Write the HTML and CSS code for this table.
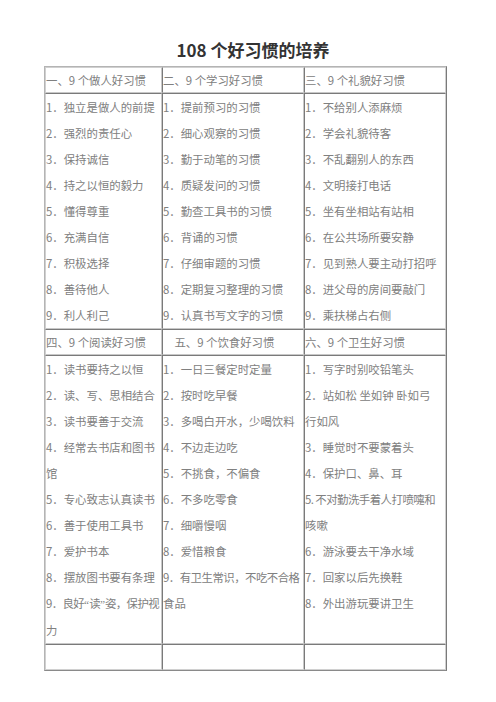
FILE: index.html
```html
<!DOCTYPE html>
<html lang="zh">
<head>
<meta charset="utf-8">
<title>108个好习惯的培养</title>
<link rel="stylesheet" href="styles.css">
</head>
<body>
<h1 class="title">108 个好习惯的培养</h1>
<table class="habits">
  <tr class="head">
    <td class="c1">一、9 个做人好习惯</td>
    <td class="c2">二、9 个学习好习惯</td>
    <td class="c3">三、9 个礼貌好习惯</td>
  </tr>
  <tr class="body">
    <td class="c1">1．独立是做人的前提<br>2．强烈的责任心<br>3．保持诚信<br>4．持之以恒的毅力<br>5．懂得尊重<br>6．充满自信<br>7．积极选择<br>8．善待他人<br>9．利人利己</td>
    <td class="c2">1．提前预习的习惯<br>2．细心观察的习惯<br>3．勤于动笔的习惯<br>4．质疑发问的习惯<br>5．勤查工具书的习惯<br>6．背诵的习惯<br>7．仔细审题的习惯<br>8．定期复习整理的习惯<br>9．认真书写文字的习惯</td>
    <td class="c3">1．不给别人添麻烦<br>2．学会礼貌待客<br>3．不乱翻别人的东西<br>4．文明接打电话<br>5．坐有坐相站有站相<br>6．在公共场所要安静<br>7．见到熟人要主动打招呼<br>8．进父母的房间要敲门<br>9．乘扶梯占右侧</td>
  </tr>
  <tr class="head">
    <td class="c1">四、9 个阅读好习惯</td>
    <td class="c2">　五、9 个饮食好习惯</td>
    <td class="c3">六、9 个卫生好习惯</td>
  </tr>
  <tr class="body">
    <td class="c1">1．读书要持之以恒<br>2．读、写、思相结合<br>3．读书要善于交流<br>4．经常去书店和图书<br>馆<br>5．专心致志认真读书<br>6．善于使用工具书<br>7．爱护书本<br>8．摆放图书要有条理<br><span class="tighter">9．良好<span class="q">“</span>读<span class="q">”</span>姿，保护视</span><br>力</td>
    <td class="c2">1．一日三餐定时定量<br>2．按时吃早餐<br>3．多喝白开水，少喝饮料<br>4．不边走边吃<br>5．不挑食，不偏食<br>6．不多吃零食<br>7．细嚼慢咽<br>8．爱惜粮食<br><span class="tight">9．有卫生常识，不吃不合格</span><br>食品</td>
    <td class="c3">1．写字时别咬铅笔头<br>2．站如松 坐如钟 卧如弓<br>行如风<br>3．睡觉时不要蒙着头<br>4．保护口、鼻、耳<br><span class="tight">5.&#8201;不对勤洗手着人打喷嚏和</span><br>咳嗽<br>6．游泳要去干净水域<br>7．回家以后先换鞋<br>8．外出游玩要讲卫生</td>
  </tr>
  <tr class="empty">
    <td class="c1"></td>
    <td class="c2"></td>
    <td class="c3"></td>
  </tr>
</table>
</body>
</html>
```

FILE: styles.css
```css
html, body {
  margin: 0;
  padding: 0;
  background: #ffffff;
}

body {
  font-family: "Noto Sans CJK SC", "Noto Sans", sans-serif;
}

.title {
  margin: 40px 0 6px 0;
  padding-left: 10px;
  height: 20px;
  line-height: 20px;
  font-size: 17px;
  font-weight: bold;
  color: #333333;
  text-align: center;
}

.habits {
  margin-left: 44px;
  width: 403px;
  table-layout: fixed;
  border-collapse: separate;
  border-spacing: 0;
  border-style: solid;
  border-width: 1px;
  border-color: #b4b4b4 #7a7a7a #8a8a8a #b4b4b4;
}

.habits td {
  box-sizing: border-box;
  padding: 0;
  vertical-align: top;
  font-size: 11.4px;
  line-height: 26px;
  color: #808080;
  white-space: pre;
  overflow: visible;
  border-style: solid;
  border-width: 1px;
  border-color: #7a7a7a #c8c8c8 #c8c8c8 #7a7a7a;
}

.habits td.c1 {
  width: 117px;
  border-left-color: #d0d0d0;
}

.habits td.c2 {
  width: 142px;
}

.habits td.c3 {
  width: 142px;
  border-right-color: #d0d0d0;
}

.habits tr:first-child td {
  border-top-color: #d0d0d0;
}

.habits .head td {
  height: 26px;
  line-height: 24px;
  vertical-align: middle;
}

.habits .empty td {
  height: 26px;
  line-height: 24px;
  border-bottom-color: #d0d0d0;
}

.tight {
  letter-spacing: -0.5px;
}

.tighter {
  letter-spacing: -0.6px;
}

.q {
  font-family: "Liberation Serif", serif;
  letter-spacing: 0;
}
```
